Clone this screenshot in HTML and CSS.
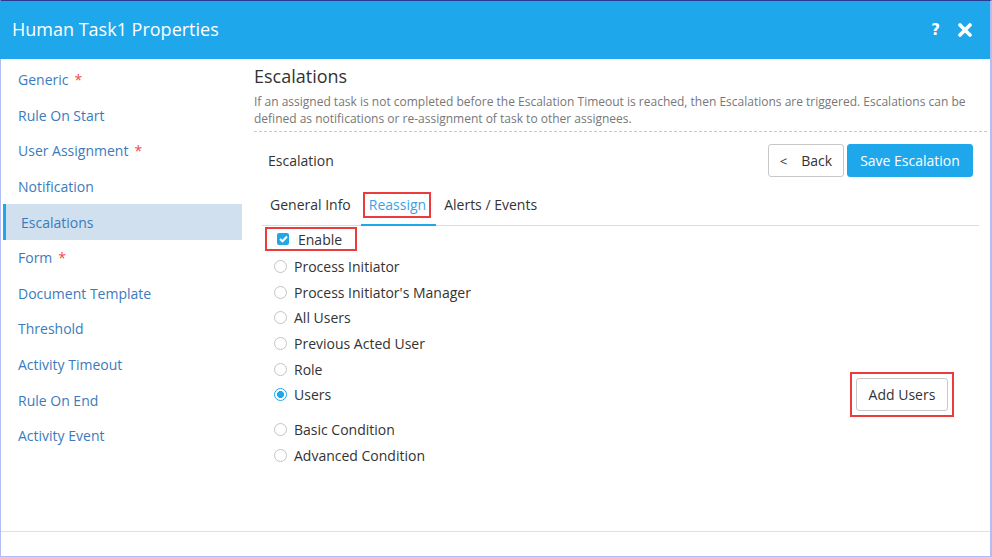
FILE: index.html
```html
<!DOCTYPE html>
<html>
<head>
<meta charset="utf-8">
<link rel="stylesheet" href="styles.css">
</head>
<body>
<div class="dialog">
  <header class="hdr">
    <div class="hdr-title">Human Task1 Properties</div>
    <div class="hdr-icons">
      <span class="help">?</span>
      <svg class="close" width="14" height="14" viewBox="0 0 14 14"><path d="M2 2 L12 12 M12 2 L2 12" stroke="#fff" stroke-width="3.6" stroke-linecap="round"/></svg>
    </div>
  </header>
  <div class="body">
    <nav class="side">
      <div class="item">Generic <span class="req">*</span></div>
      <div class="item">Rule On Start</div>
      <div class="item">User Assignment <span class="req">*</span></div>
      <div class="item">Notification</div>
      <div class="item active">Escalations</div>
      <div class="item">Form <span class="req">*</span></div>
      <div class="item">Document Template</div>
      <div class="item">Threshold</div>
      <div class="item">Activity Timeout</div>
      <div class="item">Rule On End</div>
      <div class="item">Activity Event</div>
    </nav>
    <main class="main">
      <h1 class="title">Escalations</h1>
      <p class="desc">If an assigned task is not completed before the Escalation Timeout is reached, then Escalations are triggered. Escalations can be defined as notifications or re-assignment of task to other assignees.</p>
      <section class="panel">
        <div class="panel-head">
          <span class="panel-title">Escalation</span>
          <div class="btns">
            <button class="btn back"><span class="chev">&lt;</span>Back</button>
            <button class="btn save">Save Escalation</button>
          </div>
        </div>
        <div class="tabs">
          <div class="tab"><span class="hl">General Info</span></div>
          <div class="tab active"><span class="hl marked">Reassign</span></div>
          <div class="tab"><span class="hl">Alerts / Events</span></div>
        </div>
        <div class="enable">
          <span class="chk"><svg width="9" height="8" viewBox="0 0 9 8"><path d="M1 4 L3.5 6.3 L8 1.5" fill="none" stroke="#fff" stroke-width="2"/></svg></span>
          <span>Enable</span>
        </div>
        <div class="radios">
          <div class="row"><span class="rad"></span>Process Initiator</div>
          <div class="row"><span class="rad"></span>Process Initiator's Manager</div>
          <div class="row"><span class="rad"></span>All Users</div>
          <div class="row"><span class="rad"></span>Previous Acted User</div>
          <div class="row"><span class="rad"></span>Role</div>
          <div class="row users"><span class="rad on"></span>Users
            <span class="addbox"><button class="btn add">Add Users</button></span>
          </div>
          <div class="row"><span class="rad"></span>Basic Condition</div>
          <div class="row"><span class="rad"></span>Advanced Condition</div>
        </div>
      </section>
    </main>
  </div>
  <footer class="foot"></footer>
</div>
</body>
</html>
```

FILE: styles.css
```css
* { box-sizing: border-box; }
html, body { margin: 0; padding: 0; }
body { font-family: "Open Sans", "Liberation Sans", sans-serif; color: #333; background: #fff; }

.dialog {
  width: 992px; height: 557px;
  border-top: 1px solid #2b3990;
  border-left: 1px solid #b3bcf5;
  border-right: 2px solid #b3bcf5;
  border-bottom: 1px solid #b3bcf5;
  display: flex; flex-direction: column;
}

.hdr {
  height: 58px; background: #1fa7ec; color: #fff;
  display: flex; align-items: center; justify-content: space-between;
  margin-left: -1px;
  padding: 0 18px 0 12px;
}
.hdr-title { font-size: 18px; padding-bottom: 2px; }
.hdr-icons { display: flex; align-items: center; gap: 16px; }
.help { font-weight: bold; font-size: 15px; font-family: "DejaVu Sans", sans-serif; margin-right: 2px; }
.close { display: block; }

.body { flex: 1; display: flex; min-height: 0; }

.side { width: 241px; padding: 3px 0 0 2px; }
.item {
  height: 35.6px; display: flex; align-items: center;
  padding-left: 15px; font-size: 14px; color: #3b7bbd;
}
.item.active { background: #d1e0ee; border-left: 3px solid #1fa7ec; }
.req { color: #f04848; margin-left: 6px; }

.main { flex: 1; padding: 5px 3px 0 12px; }
.title { margin: 0; font-size: 18px; font-weight: normal; line-height: 24px; color: #333; }
.desc {
  margin: 5px 0 0; font-size: 12px; line-height: 17px; color: #777;
  padding-bottom: 4px; border-bottom: 1px dashed #c8c8c8;
}

.panel { margin: 12px 8px 0 8px; }
.panel-head { display: flex; justify-content: space-between; align-items: center; padding: 0 6px; }
.panel-title { font-size: 14px; }
.btns { display: flex; gap: 3px; }
.btn {
  font-family: "Open Sans", "Liberation Sans", sans-serif; font-size: 14px;
  height: 33px; border-radius: 3px; cursor: pointer;
}
.back { width: 76px; background: #fff; border: 1px solid #c8c8c8; color: #333; }
.chev { margin-right: 14px; font-size: 13px; }
.save { width: 126px; background: #1fa7ec; border: 1px solid #1fa7ec; color: #fff; }

.tabs { display: flex; margin-top: 12px; border-bottom: 1px solid #ddd; }
.tab {
  font-size: 14px; padding: 3px 5px 6px 2px;
  border-bottom: 2px solid transparent; margin-bottom: -1px;
  line-height: 22px;
}
.tab.active { border-bottom-color: #1fa7ec; color: #3aa2e8; }
.hl { display: block; border: 2px solid transparent; padding: 0 3px 0 4px; }
.hl.marked { border-color: #ea3c3c; }

.enable {
  display: inline-flex; align-items: center;
  margin: -1px 0 0 3px; height: 24px; width: 92px;
  border: 2px solid #ea3c3c; padding-left: 10px; font-size: 14px;
}
.chk {
  width: 12px; height: 12px; background: #1fa7ec; border-radius: 2px;
  display: inline-flex; align-items: center; justify-content: center;
  margin-right: 9px;
}
.chk svg { display: block; }

.radios { margin-top: 3px; padding-left: 12px; }
.row { height: 25.6px; display: flex; align-items: center; font-size: 14px; }
.rad {
  width: 13px; height: 13px; border: 1px solid #c4c4c4; border-radius: 50%;
  margin-right: 7px; flex: none;
}
.rad.on { border: 1.5px solid #1fa7ec; background: radial-gradient(circle, #1fa7ec 0 3.2px, #fff 3.8px); }
.users { margin-bottom: 9.5px; }
.addbox {
  margin-left: auto; margin-right: 25px;
  border: 2px solid #ea3c3c; padding: 4px 4px; height: 45px;
  display: flex; align-items: center;
}
.add { width: 92px; background: #fff; border: 1px solid #c8c8c8; color: #333; }

.foot { height: 25px; border-top: 1px solid #e0e0e0; }
```
